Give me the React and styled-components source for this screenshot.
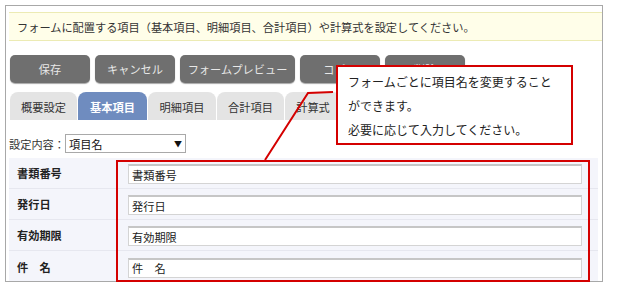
import React from 'react';
import styled, { createGlobalStyle } from 'styled-components';

const GlobalStyle = createGlobalStyle`
body {
  margin: 0;
  background: #fff;
  font-family: "Noto Sans CJK JP", "Noto Sans", sans-serif;
  color: #333;
}
* { box-sizing: border-box; }
`;

const Page = styled.div`
position: relative;
width: 640px;
height: 290px;
padding: 5px 0 0 5px;
overflow: hidden;
`;

const Frame = styled.div`
width: 598px;
height: 277px;
border: 1px solid #a8a8a8;
padding: 6px 0 0 3px;
overflow: hidden;
`;

const Notice = styled.div`
height: 29px;
background: #fffee9;
border-top: 1px solid #ecebb4;
border-bottom: 1px solid #ecebb4;
padding-left: 8px;
display: flex;
align-items: center;
font-size: 11.2px;
color: #333;
`;

const ButtonBar = styled.div`
display: flex;
gap: 5px;
margin: 14px 0 0 1px;
`;

const Button = styled.div`
width: ${p => p.w}px;
height: 28px;
border-radius: 5px;
background: #6f6f6f;
box-shadow: 0 1px 1px rgba(0, 0, 0, 0.35);
color: #e8e8e8;
font-size: 11.2px;
display: flex;
align-items: center;
justify-content: center;
`;

const TabBar = styled.div`
display: flex;
gap: 1px;
margin: 9px 0 0 1px;
`;

const Tab = styled.div`
width: ${p => p.w}px;
height: 28px;
border-radius: 8px 8px 0 0;
background: ${p => (p.active ? '#6f8cbf' : '#e4e4e4')};
color: ${p => (p.active ? '#fff' : '#333')};
font-weight: ${p => (p.active ? 'bold' : 'normal')};
font-size: 11.2px;
display: flex;
align-items: center;
justify-content: center;
padding-top: 2px;
`;

const SettingRow = styled.div`
display: flex;
align-items: center;
margin-top: 14px;
font-size: 11.2px;
`;

const FakeSelect = styled.div`
width: 121px;
height: 19px;
border: 1px solid #a9a9a9;
background: #fff;
display: flex;
align-items: center;
justify-content: space-between;
padding: 0 3px 0 3px;
color: #111;
`;

const Arrow = styled.span`
font-size: 8px;
color: #111;
`;

const Table = styled.div`
width: 589px;
margin-top: 5px;
background: #f4f5fb;
`;

const Row = styled.div`
display: flex;
height: ${p => p.h}px;
border-bottom: 1px solid #e6e7ef;
&:last-child { border-bottom: none; }
`;

const Label = styled.div`
width: 106px;
padding-left: 8px;
display: flex;
align-items: center;
font-size: 11.2px;
font-weight: bold;
color: #222;
white-space: pre;
`;

const Cell = styled.div`
flex: 1;
display: flex;
align-items: center;
padding-left: 13px;
`;

const TextInput = styled.div`
width: 454px;
height: 20px;
margin-top: 2px;
background: #fff;
border: 1px solid #d4d4d4;
border-top: 2px solid #c6c6c6;
padding-left: 3px;
display: flex;
align-items: center;
font-size: 11.2px;
color: #222;
white-space: pre;
`;

const Highlight = styled.div`
position: absolute;
left: 116px;
top: 160px;
width: 474px;
height: 122px;
border: 2px solid #d40000;
pointer-events: none;
`;

const Callout = styled.div`
position: absolute;
left: 336px;
top: 65px;
width: 237px;
height: 80px;
border: 2px solid #d40000;
background: #fff;
padding: 3px 0 0 10px;
font-size: 12px;
line-height: 24px;
color: #222;
`;

const Leader = styled.svg`
position: absolute;
left: 0;
top: 0;
pointer-events: none;
`;

const buttons = [
  { label: '保存', w: 80 },
  { label: 'キャンセル', w: 80 },
  { label: 'フォームプレビュー', w: 115 },
  { label: 'コピー', w: 80 },
  { label: '削除', w: 80 },
];

const tabs = [
  { label: '概要設定', w: 67 },
  { label: '基本項目', w: 69, active: true },
  { label: '明細項目', w: 68 },
  { label: '合計項目', w: 67 },
  { label: '計算式', w: 56 },
  { label: '', w: 60 },
];

const fields = [
  { label: '書類番号', h: 31 },
  { label: '発行日', h: 31 },
  { label: '有効期限', h: 31 },
  { label: '件　名', h: 31 },
];

export default function App() {
  return (
    <Page>
      <GlobalStyle />
      <Frame>
        <Notice>フォームに配置する項目（基本項目、明細項目、合計項目）や計算式を設定してください。</Notice>
        <ButtonBar>
          {buttons.map((b, i) => (
            <Button key={i} w={b.w}>{b.label}</Button>
          ))}
        </ButtonBar>
        <TabBar>
          {tabs.map((t, i) => (
            <Tab key={i} w={t.w} active={t.active}>{t.label}</Tab>
          ))}
        </TabBar>
        <SettingRow>
          設定内容：
          <FakeSelect>
            項目名
            <Arrow>▼</Arrow>
          </FakeSelect>
        </SettingRow>
        <Table>
          {fields.map((f, i) => (
            <Row key={i} h={f.h}>
              <Label>{f.label}</Label>
              <Cell>
                <TextInput>{f.label}</TextInput>
              </Cell>
            </Row>
          ))}
        </Table>
      </Frame>
      <Leader width="640" height="290">
        <polyline points="265,160 308,93 333,92" fill="none" stroke="#d40000" strokeWidth="2" />
      </Leader>
      <Highlight />
      <Callout>
        フォームごとに項目名を変更すること<br />
        ができます。<br />
        必要に応じて入力してください。
      </Callout>
    </Page>
  );
}
